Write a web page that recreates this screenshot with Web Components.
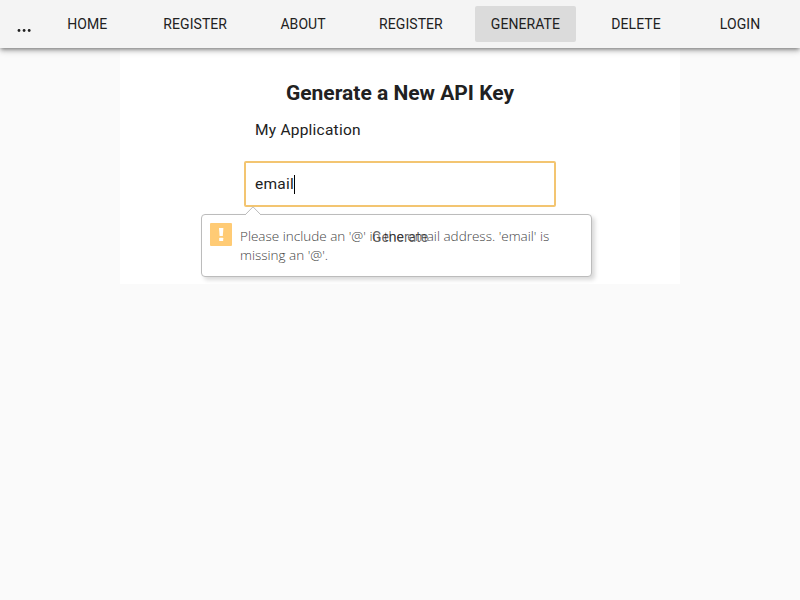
<!DOCTYPE html>
<html lang="en">
<head>
<meta charset="utf-8">
<title>Generate a New API Key</title>
<style>
body{margin:0;background:#fafafa;color:#212121;font-family:Roboto,sans-serif;height:600px;overflow:hidden}
</style>
</head>
<body>
<app-bar>
<nav-button>HOME</nav-button><nav-button>REGISTER</nav-button><nav-button>ABOUT</nav-button><nav-button>REGISTER</nav-button><nav-button active>GENERATE</nav-button><nav-button>DELETE</nav-button><nav-button>LOGIN</nav-button>
</app-bar>
<key-card heading="Generate a New API Key">
<text-field>My Application</text-field>
<text-field focused>email<validation-bubble slot="hint">Please include an '@' in the email address. 'email' is missing an '@'.</validation-bubble></text-field>
<submit-button>Generate</submit-button>
</key-card>
<script>
function element(name, html) {
  customElements.define(name, class extends HTMLElement {
    connectedCallback() {
      if (this.shadowRoot) return;
      const root = this.attachShadow({mode: 'open'});
      root.innerHTML = html;
      const h = root.querySelector('h1');
      if (h) h.textContent = this.getAttribute('heading');
    }
  });
}
element('app-bar', `<style>
:host{display:flex;position:relative;z-index:2;height:48px;box-sizing:border-box;padding:0 16px;align-items:center;justify-content:space-between;background:#f4f4f4;box-shadow:0 2px 4px -1px rgba(0,0,0,.4),0 3px 6px rgba(0,0,0,.22)}
svg{width:16px;height:16px;margin-right:-5px;transform:translateY(2px)}
nav{display:flex;gap:16px}
</style><svg viewBox="0 0 16 16" fill="#212121"><circle cx="3" cy="12.5" r="1.4"/><circle cx="8.1" cy="12.5" r="1.4"/><circle cx="13.2" cy="12.5" r="1.4"/></svg><nav><slot></slot></nav>`);
element('nav-button', `<style>
:host{display:flex;align-items:center;justify-content:center;box-sizing:border-box;min-width:88px;height:36px;padding:0 16px;border-radius:2px;font-size:14px;font-weight:450;letter-spacing:.07px;color:#212121}
:host([active]){background:#dbdbdb}
</style><slot></slot>`);
element('key-card', `<style>
:host{display:flex;flex-direction:column;align-items:center;width:560px;height:236px;margin:0 auto;background:#fff;box-sizing:border-box;padding-top:33px}
h1{margin:0;font-size:21px;line-height:25px;font-weight:700}
</style><h1></h1><slot></slot>`);
element('text-field', `<style>
:host{display:flex;position:relative;align-items:center;box-sizing:border-box;width:312px;height:46px;margin-top:1px;padding:0 9px;border:2px solid transparent;border-radius:2px;font-size:15.5px;font-weight:380;letter-spacing:.23px;line-height:20px}
:host([focused]){border-color:#f3c571;margin-top:8px}
i{display:none;width:1px;height:19px;background:#000}
:host([focused]) i{display:block}
</style><slot></slot><i></i><slot name="hint"></slot>`);
element('validation-bubble', `<style>
:host{position:absolute;left:-45px;top:51px;width:391px;height:63px;box-sizing:border-box;display:flex;gap:8px;padding:8px;border:1px solid #bcbcbc;border-radius:4px;background:#fff;box-shadow:3px 3px 4px rgba(0,0,0,.15);font:13.5px/19px "Open Sans",sans-serif;font-weight:300;letter-spacing:0;color:#444}
.tip{position:absolute;left:43px;top:-9px}
.mark{flex:none;width:22px;height:23px}
p{margin:4px 0 0;width:330px}
</style><svg class="tip" width="16" height="9"><path d="M0 9L8 .8L16 9" fill="#fff" stroke="#bcbcbc"/></svg>
<svg class="mark" viewBox="0 0 22 23"><rect width="22" height="23" rx="1" fill="#ffcb75"/><path d="M9 5h4.4l-.6 8h-3.2z" fill="#fff"/><rect x="9.2" y="14.7" width="4" height="3.3" rx=".6" fill="#fff"/></svg>
<p><slot></slot></p>`);
element('submit-button', `<style>
:host{display:block;position:relative;z-index:1;margin-top:21px;font-size:14px;line-height:18px;color:rgba(0,0,0,.62)}
</style><slot></slot>`);
</script>
</body>
</html>
